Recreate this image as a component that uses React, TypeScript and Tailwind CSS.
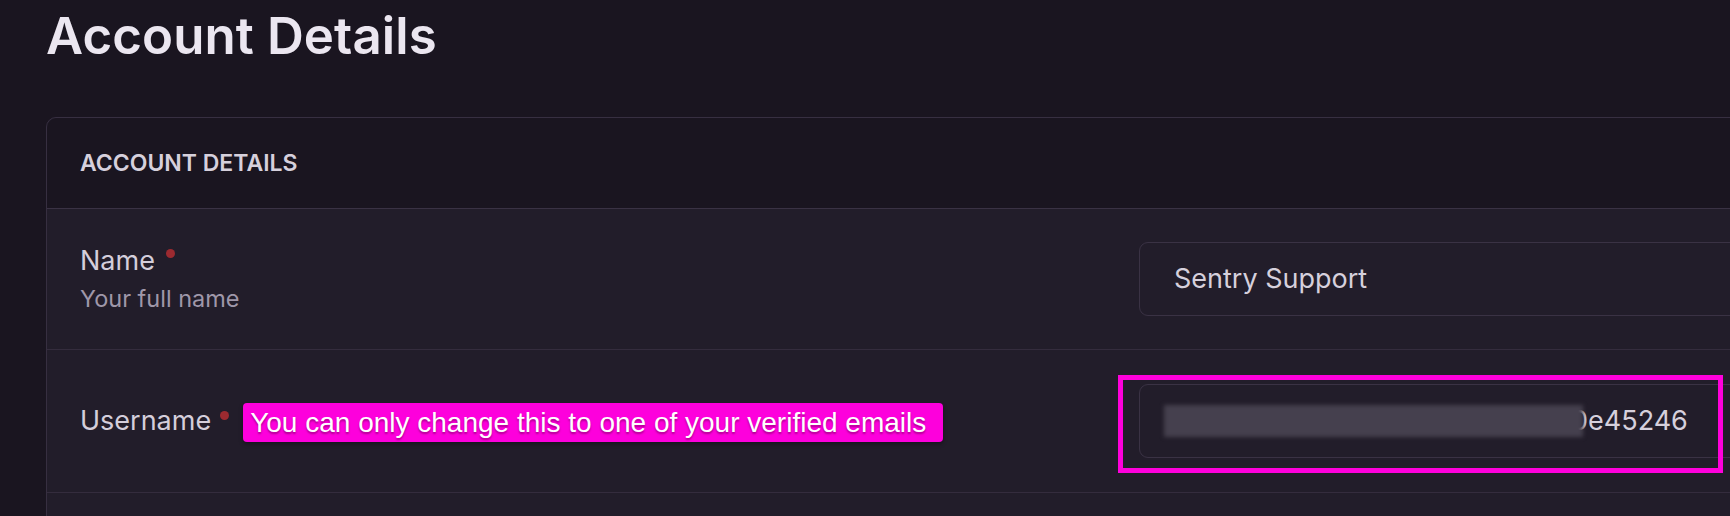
import React from "react";

export default function App() {
  return (
    <div
      className="h-[516px] w-[1730px] overflow-hidden bg-[#1a1520]"
      style={{ fontFamily: "Inter, 'Noto Sans', sans-serif" }}
    >
      <div className="pl-[46px]">
        <h1 className="mt-[10px] text-[51px] font-semibold leading-none tracking-[0.1px] text-[#ebe6f0]">
          Account Details
        </h1>
        <div className="mt-[56px] w-[1800px] rounded-tl-[10px] border border-[#372f41] bg-[#221d2a]">
          <div className="flex h-[91px] items-center rounded-tl-[10px] border-b border-[#3a3244] bg-[#1a1520] px-[33px]">
            <span className="text-[23px] font-semibold uppercase text-[#d6d0dc]">Account Details</span>
          </div>
          <div className="flex h-[141px] items-center border-b border-[#342c3d] px-[33px]">
            <div className="flex w-[1059px] flex-col">
              <div className="flex items-center">
                <span className="text-[27px] leading-[36px] text-[#d4cedb]">Name</span>
                <span className="ml-[11px] mt-[-16px] h-[9px] w-[9px] shrink-0 rounded-full bg-[#9c2a30]" />
              </div>
              <span className="mt-[4px] text-[23.5px] leading-[32px] text-[#9f97a9]">Your full name</span>
            </div>
            <div className="flex h-[74px] flex-1 items-center rounded-[9px] border border-[#3a3244] pl-[34px]">
              <span className="text-[27px] text-[#d6d0dc]">Sentry Support</span>
            </div>
          </div>
          <div className="flex h-[143px] items-center border-b border-[#342c3d] px-[33px]">
            <div className="flex w-[1059px] items-center">
              <span className="text-[27px] leading-[36px] text-[#d4cedb]">Username</span>
              <span className="ml-[9px] mt-[-12px] h-[9px] w-[9px] shrink-0 rounded-full bg-[#9c2a30]" />
              <span
                className="ml-[14px] mt-[3px] flex h-[39px] items-center rounded-[4px] bg-[#fd00dc] pl-[7px] pr-[17px] text-[28px] text-white shadow-[0_2px_4px_rgba(0,0,0,0.35)] [text-shadow:0_2px_2px_rgba(120,0,90,0.6)]"
                style={{ fontFamily: "'Liberation Sans', Arial, sans-serif" }}
              >
                You can only change this to one of your verified emails
              </span>
            </div>
            <div className="relative flex-1">
              <div className="flex h-[74px] items-center overflow-hidden rounded-[9px] border border-[#3a3244] pl-[24px]">
                <div className="relative z-10 h-[32px] w-[419px] shrink-0 bg-[#45404e] blur-[2px]" />
                <span className="-ml-[12px] text-[27px] text-[#d6d0dc]">0e45246</span>
              </div>
              <div className="pointer-events-none absolute left-[-21px] top-[-9px] h-[98px] w-[605px] border-[5px] border-[#ff00dc]" />
            </div>
          </div>
          <div className="h-[60px]" />
        </div>
      </div>
    </div>
  );
}
